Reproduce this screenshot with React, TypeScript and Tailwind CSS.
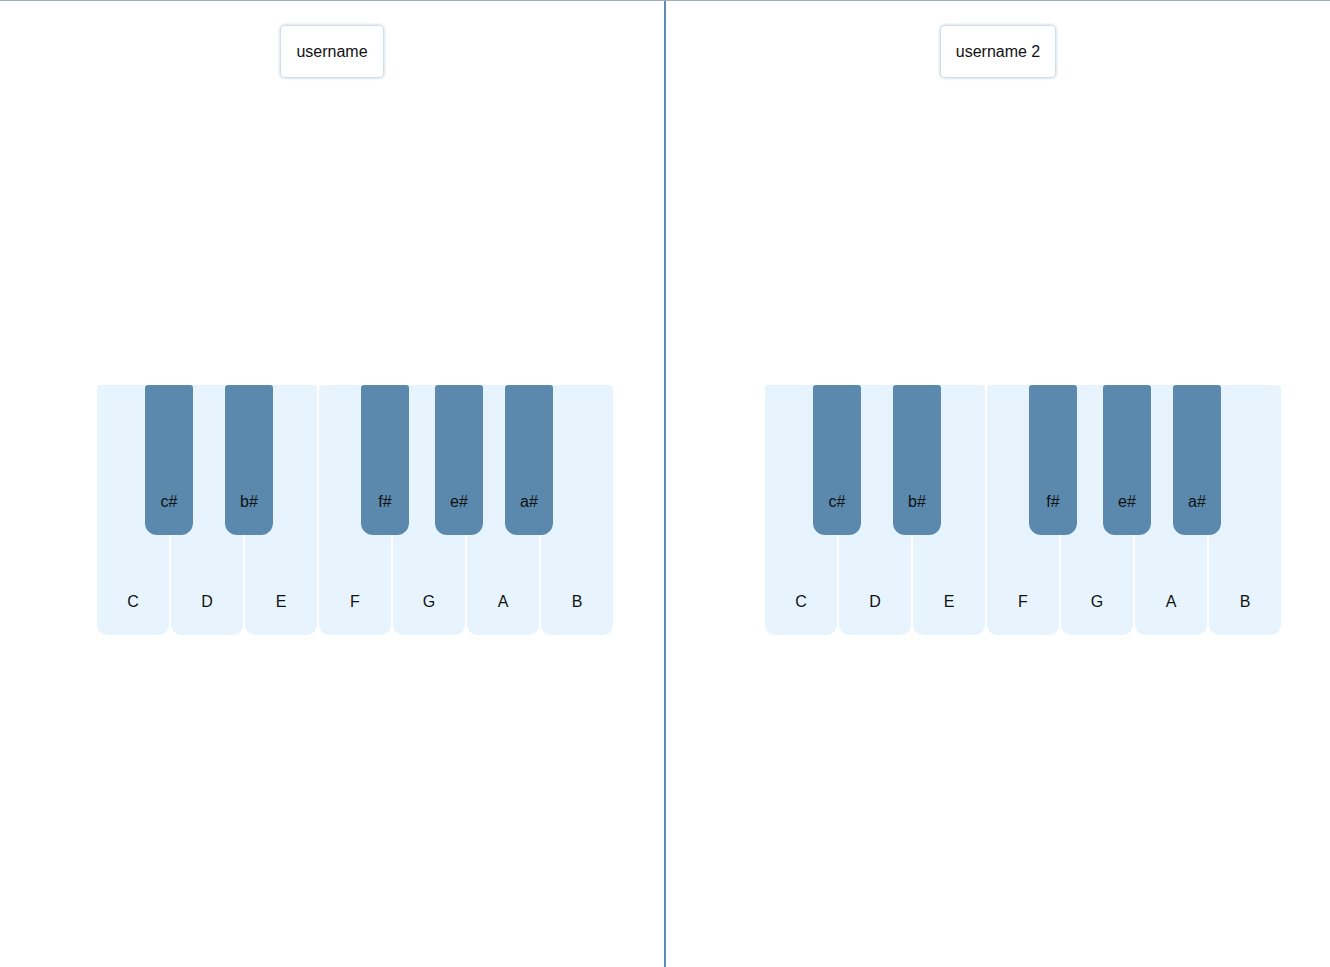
const whiteKeys = ['C', 'D', 'E', 'F', 'G', 'A', 'B']

const blackKeys = [
  { name: 'c#', left: 48 },
  { name: 'b#', left: 128 },
  { name: 'f#', left: 264 },
  { name: 'e#', left: 338 },
  { name: 'a#', left: 408 },
]

function Piano({ offset }: { offset: string }) {
  return (
    <div className={`relative w-[516px] ${offset}`}>
      {/* white keys */}
      <div className="flex gap-[2px]">
        {whiteKeys.map((k) => (
          <div
            key={k}
            className="flex h-[250px] w-[72px] items-end justify-center rounded-t-[3px] rounded-b-[10px] bg-[#e8f4fd] pb-[21px] text-[16px] text-[#111]"
          >
            {k}
          </div>
        ))}
      </div>

      {/* black keys */}
      {blackKeys.map((k) => (
        <div
          key={k.name}
          className="absolute top-0 flex h-[150px] w-[48px] items-end justify-center rounded-t-[3px] rounded-b-[12px] bg-[#5a89ad] pb-[21px] text-[16px] text-[#111]"
          style={{ left: k.left }}
        >
          {k.name}
        </div>
      ))}
    </div>
  )
}

function Panel({ name, offset }: { name: string; offset: string }) {
  return (
    <section className="flex flex-1 flex-col">
      <div className="flex justify-center pt-[25px]">
        <button className="h-[51px] rounded-[4px] bg-white px-[15px] text-[16px] text-[#111] shadow-[0_0_3px_1px_rgba(90,137,173,0.45)]">
          {name}
        </button>
      </div>
      <div className="mt-[308px]">
        <Piano offset={offset} />
      </div>
    </section>
  )
}

export default function App() {
  return (
    <div
      className="flex h-[967px] w-full border-t border-[#a3adb6] bg-white"
      style={{ fontFamily: '"Liberation Sans", Arial, sans-serif' }}
    >
      <Panel name="username" offset="ml-[97px]" />
      <div className="w-[2px] bg-[#5b8cb3]" />
      <Panel name="username 2" offset="ml-[99px]" />
    </div>
  )
}
